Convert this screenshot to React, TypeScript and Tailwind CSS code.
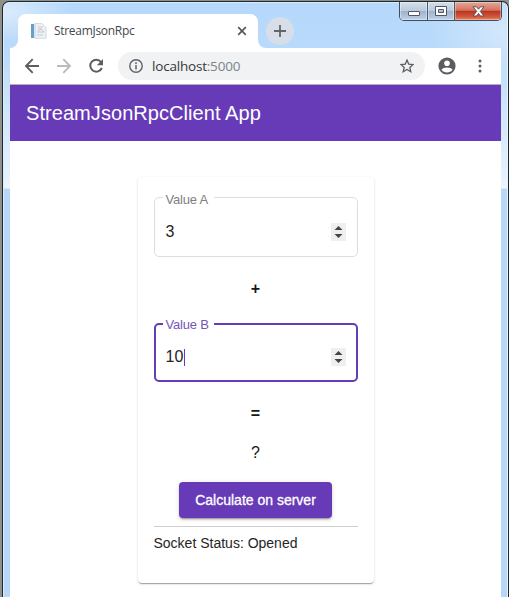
import type { ReactNode } from 'react';

function Caption() {
  return (
    <div className="absolute right-[6px] top-0 flex h-[19px] w-[103px] overflow-hidden rounded-b-[5px] border border-t-0 border-[#414c5d]">
      <div className="flex w-[28px] items-center justify-center border-r border-[#4d596b] bg-[linear-gradient(#d3dfed_0%,#bccbdd_48%,#9fb3ca_52%,#bdd0e6_100%)] shadow-[inset_0_0_0_1px_#ffffff66]">
        <svg width="14" height="6" className="mt-[5px]"><rect x="1.5" y=".5" width="11" height="4" rx=".5" fill="#fff" stroke="#535666" /></svg>
      </div>
      <div className="flex w-[27px] items-center justify-center border-r border-[#4d596b] bg-[linear-gradient(#d3dfed_0%,#bccbdd_48%,#9fb3ca_52%,#bdd0e6_100%)] shadow-[inset_0_0_0_1px_#ffffff66]">
        <svg width="12" height="10"><path fillRule="evenodd" d="M.5.5h11v9H.5zM3.5 3.5h5v3h-5z" fill="#fff" stroke="#535666" /></svg>
      </div>
      <div className="flex flex-1 items-center justify-center bg-[linear-gradient(#e4a99b_0%,#d5715d_46%,#bd3520_52%,#d2573c_82%,#e88b68_100%)] shadow-[inset_0_0_0_1px_#ffffff55]">
        <svg width="13" height="11" viewBox="0 0 13 11"><path d="M1 .8h3.5l2 2.4 2-2.4H12L8.3 5.4 12 10H8.5l-2-2.5-2 2.5H1l3.7-4.6z" fill="#fff" stroke="#59545f" /></svg>
      </div>
    </div>
  );
}

function Field({ label, value, focused = false }: { label: string; value: string; focused?: boolean }) {
  return (
    <div className={`relative flex items-center justify-between rounded-[5px] ${focused ? 'h-[59px] border-2 border-[#673ab7] pl-[10px] pr-[10px]' : 'h-[60px] border border-[#dedede] pl-[11px] pr-[11px]'}`}>
      <span className={`absolute flex h-[14px] w-[51px] items-center bg-white text-[13px] leading-[14px] tracking-[-0.2px] ${focused ? 'left-[7px] top-[-7px] pl-[3px] text-[#7856b5]' : 'left-[8px] top-[-5px] pl-[3px] text-[#808080]'}`}>{label}</span>
      <span className={`flex items-center text-[16px] leading-[18px] text-[#252525] ${focused ? 'mt-[9px]' : 'mt-[10px]'}`}>
        {value}
        {focused && <i className="ml-[0.5px] h-[17px] w-px bg-[#673ab7]" />}
      </span>
      <svg width="15" height="18" className={focused ? 'mt-[8px]' : 'mt-[10px]'}>
        <path fill="#efefef" d="M0 0h15v18H0z" />
        <path fill="#444" d="M3.5 7 7.5 3l4 4zM3.5 11h8l-4 4z" />
      </svg>
    </div>
  );
}

function Row({ children, className }: { children: ReactNode; className: string }) {
  return <div className={`text-center text-[16px] leading-[20px] text-[#171717] ${className}`}>{children}</div>;
}

export default function App() {
  return (
    <div className="h-[597px] w-[509px] bg-[#8f8f8b] pl-[2px] pt-px font-['Liberation_Sans',sans-serif]">
      <div className="relative flex h-[596px] flex-col overflow-hidden rounded-t-[7px] border border-b-0 border-[#1d292f] bg-[radial-gradient(ellipse_70px_30px_at_0_10px,#dcecfb,#dcecfb00),radial-gradient(ellipse_80px_50px_at_100%_30px,#d5e8fb,#d5e8fb00),linear-gradient(#b5d8fc_0px,#b9dafb_50px,#c9e2fa_90px,#e7f2fd_177px,#f0f7fe_186px,#b9d8f8_187px)] pl-[7px] pr-[7px] shadow-[inset_1px_1px_0_#d9edfc,inset_-1px_0_0_#e6f4fc]">
        <Caption />
        <div className="flex h-[46px] shrink-0 items-end">
          <div className="relative ml-[8px] flex h-[34px] w-[240px] items-center rounded-t-[8px] bg-white">
            <svg width="8" height="8" className="absolute bottom-0 -left-[8px]"><path d="M8 0v8H0a8 8 0 0 0 8-8z" fill="#fff" /></svg>
            <svg width="8" height="8" className="absolute bottom-0 -right-[8px]"><path d="M0 0v8h8A8 8 0 0 1 0 0z" fill="#fff" /></svg>
            <svg width="16" height="16" className="ml-[13px]" viewBox="0 0 16 16">
              <path d="M3.5.5H11l4 4v10.8H3.5z" fill="#edf0f4" stroke="#d3dbe3" />
              <path d="M0 1h3v14H0z" fill="#6aa0c4" /><path d="M3 1h2v14H3z" fill="#d2e6f1" />
              <path d="M7 4h5M7 6h4M6 9h7M6 12h6" stroke="#c4ccd5" />
              <path d="m7 8 3-2 3 3" fill="none" stroke="#e2bbb5" />
            </svg>
            <span className="ml-[7px] font-['Open_Sans'] text-[12px] leading-[16px] tracking-[-0.3px] text-[#43474c]">StreamJsonRpc</span>
            <svg width="10" height="10" className="ml-auto mr-[11px]"><path d="m1.2 1.2 7.6 7.6m0-7.6L1.2 8.8" stroke="#55595d" strokeWidth="1.7" /></svg>
          </div>
          <div className="mb-[3px] ml-[8px] flex size-[28px] items-center justify-center rounded-full bg-[#d8dee8]">
            <svg width="12" height="12"><path d="M6 0v12M0 6h12" stroke="#61666d" strokeWidth="1.8" /></svg>
          </div>
        </div>
        <div className="flex h-[37px] shrink-0 items-center border-b border-[#b3b0b8] bg-white">
          <svg width="16" height="16" className="ml-[14px]" viewBox="0 0 16 16"><path d="M15 8H2m6.7-6.8L2 8l6.7 6.8" fill="none" stroke="#5b5e62" strokeWidth="1.9" /></svg>
          <svg width="16" height="16" className="ml-[16px]" viewBox="0 0 16 16"><path d="M1 8h13M7.3 1.2 14 8l-6.7 6.8" fill="none" stroke="#babbbd" strokeWidth="1.9" /></svg>
          <svg width="16" height="16" className="ml-[16px]" viewBox="0 0 16 16"><path d="M13 4A6 6 0 1 0 13.8 10" fill="none" stroke="#5b5e62" strokeWidth="2" /><path d="M15 1v6.2H8.8z" fill="#5b5e62" /></svg>
          <div className="ml-[14px] flex h-[28px] w-[307px] items-center rounded-full bg-[#f0f2f3] pl-[11px] pr-[11px]">
            <svg width="14" height="14" viewBox="0 0 14 14"><circle cx="7" cy="7" r="6.2" fill="none" stroke="#5f6368" strokeWidth="1.4" /><path d="M7 6v4.5M7 3.3v1.6" stroke="#5f6368" strokeWidth="1.5" /></svg>
            <span className="ml-[9px] font-['Open_Sans'] text-[13.5px] leading-[20px] tracking-[-0.2px] text-[#34373a]">localhost<span className="text-[#7f8387]">:5000</span></span>
            <svg width="14" height="14" viewBox="0 0 14 14" className="ml-auto"><path d="m7 1.1 1.7 4 4.4.4-3.3 2.9 1 4.3L7 10.4l-3.8 2.3 1-4.3L.9 5.5l4.4-.4z" fill="none" stroke="#5b5e62" strokeWidth="1.3" /></svg>
          </div>
          <svg width="18" height="18" viewBox="0 0 18 18" className="ml-[13px]"><circle cx="9" cy="9" r="8.6" fill="#5a5d61" /><circle cx="9" cy="6.2" r="2.8" fill="#fff" /><path d="M3.5 12.7c2-3 9-3 11 0a6.7 6.7 0 0 1-11 0z" fill="#fff" /></svg>
          <svg width="4" height="14" className="ml-[22px]"><circle cx="2" cy="2" r="1.5" fill="#5a5d61" /><circle cx="2" cy="7" r="1.5" fill="#5a5d61" /><circle cx="2" cy="12" r="1.5" fill="#5a5d61" /></svg>
        </div>
        <header className="flex h-[56px] shrink-0 items-center bg-[#673ab7] pl-[16px] text-[20px] tracking-[0.06px] text-white">StreamJsonRpcClient App</header>
        <main className="flex flex-1 justify-center bg-white pt-[36px]">
          <div className="flex h-[406px] w-[236px] flex-col rounded-[4px] bg-white px-[16px] pt-[20px] shadow-[0_2px_1px_-1px_#00000033,0_1px_1px_0_#00000024,0_1px_3px_0_#0000001f]">
            <Field label="Value A" value="3" />
            <Row className="mt-[22px] font-bold">+</Row>
            <div className="mt-[24px]"><Field label="Value B" value="10" focused /></div>
            <Row className="mt-[22px] font-bold">=</Row>
            <Row className="mt-[19px]">?</Row>
            <button className="mt-[19px] h-[36px] w-[153px] self-center rounded-[4px] bg-[#673ab7] text-[14px] text-white shadow-[0_3px_1px_-2px_#00000033,0_2px_2px_0_#00000024,0_1px_5px_0_#0000001f] [-webkit-text-stroke:0.3px_white]">Calculate on server</button>
            <div className="mt-[8px] border-t border-[#cfcfcf] pt-[7px] text-[14px] leading-[18px] text-[#252525]">Socket Status: Opened</div>
          </div>
        </main>
      </div>
    </div>
  );
}
